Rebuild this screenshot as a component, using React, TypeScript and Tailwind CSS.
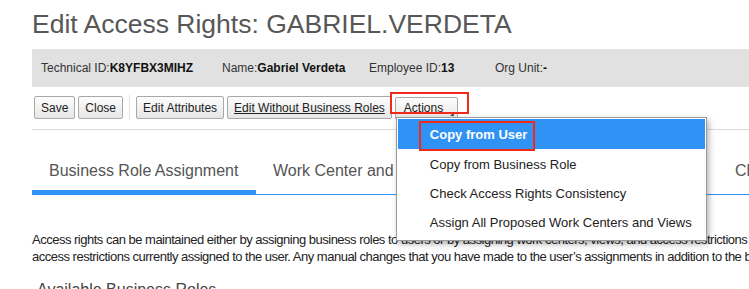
const btn =
  "h-[23px] px-[6px] border border-[#a9a9a9] rounded-[2px] bg-gradient-to-b from-[#fdfdfd] to-[#e6e6e6] text-[12px] text-[#222] leading-none whitespace-nowrap";

const menuItems = [
  "Copy from Business Role",
  "Check Access Rights Consistency",
  "Assign All Proposed Work Centers and Views",
];

export default function App() {
  return (
    <div className="w-[749px] h-[289px] overflow-hidden bg-white font-['Liberation_Sans',Arial,sans-serif] text-[#333]">
      <div className="pl-[32px] w-[900px]">
        <h1 className="pt-[9px] text-[26.5px] leading-[30px] text-[#575757]">
          Edit Access Rights: GABRIEL.VERDETA
        </h1>

        {/* user info bar */}
        <div className="mt-[10px] h-[38px] bg-[#e1e1e1] flex items-center pl-[9px] text-[12px] text-[#333] whitespace-nowrap">
          <span className="w-[181px]">
            Technical ID:<b className="text-[#111]">K8YFBX3MIHZ</b>
          </span>
          <span className="w-[147px]">
            Name:<b className="text-[#111]">Gabriel Verdeta</b>
          </span>
          <span className="w-[126px]">
            Employee ID:<b className="text-[#111]">13</b>
          </span>
          <span>
            Org Unit:<b className="text-[#111]">-</b>
          </span>
        </div>

        {/* toolbar */}
        <div className="mt-[8px] flex items-center pl-[2px] gap-[3px]">
          <button className={btn}>Save</button>
          <button className={btn}>Close</button>
          <div className="w-px h-[25px] bg-[#e4e4e4] mx-[3px]" />
          <button className={btn}>Edit Attributes</button>
          <button className={btn}>
            <span className="underline">Edit Without Business Roles</span>
          </button>
          <div className="relative">
            <button className={btn + " relative w-[63px] text-left pl-[8px]"}>
              Actions
              <span className="absolute right-[3px] bottom-[3px] w-0 h-0 border-l-[4px] border-l-transparent border-b-[4px] border-b-[#555]" />
            </button>
            <div className="absolute -left-[5px] -top-[3px] w-[79px] h-[22px] border-[2px] border-[#f0291a]" />

            {/* dropdown */}
            <div className="absolute left-[1px] top-[22px] w-[311px] bg-white border border-[#9a9a9a] shadow-[2px_3px_6px_rgba(0,0,0,0.3)] z-10 pb-[3px] text-[13px] text-[#222]">
              <div className="relative m-px h-[30px] bg-[#3092f4] flex items-center pl-[32px] text-white font-bold">
                Copy from User
                <div className="absolute left-[21px] top-[2px] w-[116px] h-[30px] border-[2px] border-[#f0291a]" />
              </div>
              {menuItems.map((m) => (
                <div key={m} className="h-[29px] flex items-center pl-[33px]">
                  {m}
                </div>
              ))}
            </div>
          </div>
        </div>

        <div className="mt-[9px] h-px bg-[#dcdcdc]" />

        {/* tabs */}
        <div className="mt-[29px] flex text-[16px] text-[#555] border-b border-[#3092f4] whitespace-nowrap">
          <div className="w-[224px] pl-[17px] pb-[7px] border-b-[5px] border-[#3092f4] -mb-px">
            Business Role Assignment
          </div>
          <div className="pl-[17px] w-[479px]">Work Center and Views</div>
          <div>Changes</div>
        </div>

        <p className="mt-[36px] text-[13px] leading-[17px] text-[#222] tracking-[-0.5px] whitespace-nowrap">
          Access rights can be maintained either by assigning business roles to users or by assigning work centers, views, and access restrictions to users. The system
          <br />
          access restrictions currently assigned to the user. Any manual changes that you have made to the user’s assignments in addition to the business roles will be
        </p>

        <h2 className="mt-[15px] pl-[5px] text-[16px] leading-[20px] text-[#444]">Available Business Roles</h2>
      </div>
    </div>
  );
}
